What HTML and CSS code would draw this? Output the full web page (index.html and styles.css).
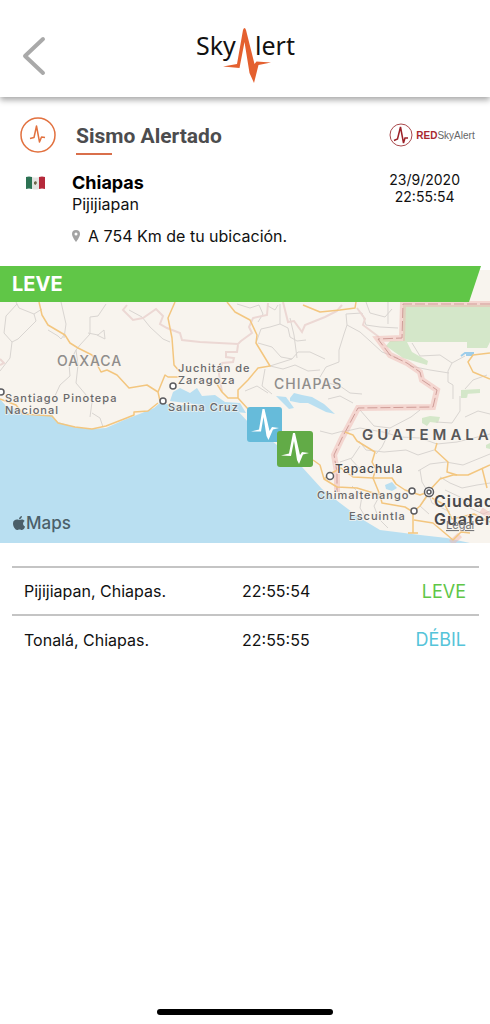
FILE: index.html
```html
<!DOCTYPE html>
<html lang="es">
<head>
  <meta charset="UTF-8">
  <meta name="viewport" content="width=device-width, initial-scale=1">
  <title>SkyAlert - Sismo Alertado</title>
  <link rel="stylesheet" href="styles.css">
</head>
<body>
  <header class="topbar">
    <button class="back" type="button" aria-label="Volver">
      <svg width="24" height="40" viewBox="0 0 24 40"><path d="M21 3L3 20L21 37" fill="none" stroke="#a9a9a9" stroke-width="4" stroke-linecap="round" stroke-linejoin="round"/></svg>
    </button>
    <svg class="logo" width="100" height="56" viewBox="0 0 100 56" role="img" aria-label="SkyAlert">
      <text class="logo-text" x="1" y="27">Sky</text>
      <text class="logo-text" x="60" y="27">lert</text>
      <path d="M28 38.500L42 36L48 2Q49.500 -2 51 2L59.500 36L61.500 33.500L76 34.500L63.500 37L59 55L54.500 45L49.500 14L44.500 40Z" fill="#e4602f"/>
    </svg>
  </header>

  <main>
    <section class="info">
      <svg class="alert-icon" width="36" height="36" viewBox="0 0 36 36">
        <circle cx="18" cy="18" r="17" fill="none" stroke="#e2713f" stroke-width="1.500"/>
        <path d="M10 21.500L14 20.500L16.500 9L19.500 25L21.500 20L25 20.500" fill="none" stroke="#e2713f" stroke-width="1.500" stroke-linejoin="round"/>
      </svg>
      <h1>Sismo Alertado</h1>
      <div class="network">
        <svg width="24" height="24" viewBox="0 0 24 24">
          <circle cx="12" cy="12" r="11" fill="none" stroke="#a9494c" stroke-width="1"/>
          <path d="M5 17.500L8.500 16L11.500 4L14.500 20L16 15L19 15" fill="none" stroke="#9c2128" stroke-width="1.500"/>
        </svg>
        <span><b>RED</b>SkyAlert</span>
      </div>

      <svg class="flag" width="19" height="14" viewBox="0 0 19 14">
        <path d="M0 1Q3 0 6 1V13Q3 12 0 13Z" fill="#2c7253"/>
        <path d="M6 1Q10 2 13 1V13Q10 14 6 13Z" fill="#e4e4e2"/>
        <path d="M13 1Q16 0 19 1V13Q16 12 13 13Z" fill="#b5293b"/>
        <path d="M8 6L10 5L11 7L9.500 9L8 8Z" fill="#6d6648"/>
      </svg>
      <div class="place">
        <h2>Chiapas</h2>
        <p>Pijijiapan</p>
      </div>
      <time class="date" datetime="2020-09-23T22:55:54">23/9/2020<br>22:55:54</time>

      <p class="distance">
        <svg width="8" height="12" viewBox="0 0 8 12"><path fill-rule="evenodd" d="M4 0A4 4 0 0 1 8 4C8 7 4 12 4 12S0 7 0 4A4 4 0 0 1 4 0ZM4 2.500A1.500 1.500 0 1 0 4 5.500A1.500 1.500 0 1 0 4 2.500Z" fill="#a3a3a3"/></svg>
        A 754 Km de tu ubicación.
      </p>
    </section>

    <section class="map">
      <svg class="map-canvas" viewBox="0 0 490 277" preserveAspectRatio="xMidYMid slice">
        <rect width="490" height="277" fill="#f8f4ee"/>
        <rect width="490" height="4" fill="#fff"/>

        <!-- parks -->
        <g fill="#d4e7c9">
          <path d="M403 39H490V76L487 82H467V76H407L412 86L428 95L427 99L403 92L386 80L390 75H403Z"/>
          <path d="M461 124L480 123V127L466 128V132H461Z"/>
          <path d="M422 152L430 150L440 151L438 157L430 156L427 160L422 157Z"/>
          <path d="M462 129L468 127L467 132ZM486 179L490 177V183L486 182Z"/>
        </g>

        <!-- sea and lagoons -->
        <g fill="#b9dff1">
          <path d="M0 133L6 140L30 148L52 149L58 156L75 161L92 163L106 162L124 154L142 147L154 142L160 137L172 139L200 139L220 138L235 142L250 158L277 179L302 201L322 223L340 237L360 252L380 264L420 269L447 272L470 277H0Z"/>
          <path d="M170 135L173 126L180 122L190 127L197 122L202 130L215 129L225 136L240 137L246 147L235 146L210 140Z"/>
          <path d="M290 132L294 127L302 129L312 131L324 138L335 148L326 146L308 137L300 137L290 135Z"/>
          <path d="M276 130L286 131L294 142L289 143Z"/>
          <path d="M385 219L392 216L397 222L392 225L386 223Z"/>
        </g>
        <path d="M461 90L465 87H474M466 89H473" fill="none" stroke="#9dcdea" stroke-width="2"/>

        <!-- minor roads -->
        <g fill="none" stroke="#d9d5d1" stroke-width="1">
          <path d="M17 38L6 50L4 67L12 76L18 73L27 64L36 55L34 48L19 42L16 36M12 76L10 92L0 105M34 48L42 43M61 36L66 58L64 72M106 38L98 50L90 51L90 68L80 79L76 84L78 99L76 117L92 136L90 151M88 67L98 69L104 64L105 73L97 69M76 84L69 98L70 110L60 119L54 132M129 44L142 51L150 61L163 73L170 76"/>
          <path d="M48 64L58 70L61 73L64 69M92 147L100 152L103 161M237 38L250 42L259 39L263 48L258 56M268 40L275 44L278 39M280 38L280 58L270 61L261 63L256 77M280 58L288 62L290 71L297 75L306 74M258 77L272 81L281 91L292 93L270 100M292 93L298 86L310 86L325 93M270 100L283 103L295 99L308 105L320 104M265 103L262 120L272 128M245 125L257 120L268 127M290 52L294 69L297 92"/>
          <path d="M346 48L362 47L366 59L380 61L398 62M346 48L347 59L360 66L370 75L382 86L398 92M347 59L344 68L339 84V96L326 101L320 111M366 36L370 47L385 51L392 43M388 36V58M412 77L420 90L440 89L452 97L448 105V116L453 119V133M410 100L430 104L449 107M452 97L465 90M320 123L328 117L340 120L350 127L362 128M328 133L340 130L353 137M320 165L332 168L343 165M360 144L374 160L390 162L411 151L420 144M460 130V145L452 157L436 156M465 123L473 114L487 109M465 151L478 145L490 148"/>
          <path d="M342 166L360 162L383 166L400 171L420 172L437 178L457 176L490 168M359 175L366 184L384 186L406 184L418 189L434 184M390 164L382 181L376 188M420 204L422 216L428 226L432 237L450 246M418 205L430 198L446 196L463 199L490 188M340 196L352 192L360 180M350 192L360 203L372 207M352 220L362 230L360 242L366 252M380 229L374 240L379 253L388 262M440 211L450 217L462 222L477 219L490 217M445 224L460 231L468 238M470 242L483 248L490 245M427 231L420 240L429 248"/>
        </g>

        <!-- state limits -->
        <path d="M127 39L123 44L133 54L143 52L156 43L163 50L160 58L167 62L180 67L182 74L200 76L238 78L241 75L252 67L249 61L253 52L267 49L268 37M238 79L237 86L226 86V91L234 92L233 96L222 97L219 108L222 126M283 36L288 56L294 55L302 66L305 59L325 51L337 45L342 39M357 42L365 53L363 59L379 71M0 93L4 97L0 99" fill="none" stroke="#ecd8d4" stroke-width="2"/>

        <!-- country border -->
        <path class="border-glow" d="M490 38H403L402 72L378 73L390 89L407 97L420 106L422 114L437 124L433 141L358 142L342 172L334 189L337 206V226"/>
        <path class="border-line" d="M490 38H403L402 72L378 73L390 89L407 97L420 106L422 114L437 124L433 141L358 142L342 172L334 189L337 206V226"/>
        <path class="border-glow" d="M451 277L460 269M481 244L490 250"/>

        <!-- highways -->
        <g fill="none" stroke="#f3c67f" stroke-width="1.500" stroke-linejoin="round">
          <path d="M39 36L42 49L48 59L65 69L70 77L78 82L92 89L101 106L107 104L117 109L129 122L147 119L158 126L160 135M158 126L165 109L168 111H180M175 36L168 52L172 72L174 99L180 106"/>
          <path d="M227 36L235 46L250 54L257 69L256 77L270 100L258 102L248 114L238 124V132L228 132L222 126L215 115M238 132L248 143M303 39L320 46L340 44L355 42L356 36"/>
          <path d="M0 133L16 139L23 148L52 150L58 157L75 161L92 163L106 160L124 153L134 149V146L148 145L158 137"/>
          <path d="M490 87L473 89L468 96L473 106L490 113M345 166L353 169L357 175L375 186L372 196L376 203L373 212L392 212L396 218L405 224L420 229L428 226L440 213L453 209H468L490 199"/>
          <path d="M437 177L435 184L448 196L447 206L457 209M313 194L320 199L324 213L330 208L341 202L353 211L373 212M324 213L337 221L357 222L380 229L382 237L405 241L413 246V267M428 228L420 240L413 246M408 267H418M414 254L433 257L453 274M432 232L445 239L452 253L474 248L490 256M482 202L487 222M453 274L461 266L470 267M380 229L373 212"/>
        </g>

        <!-- towns -->
        <g fill="#fff" stroke="#5c5c60" stroke-width="1.500">
          <circle cx="1" cy="126" r="3"/>
          <circle cx="173" cy="120" r="3"/>
          <circle cx="163" cy="135" r="3"/>
          <circle cx="330" cy="210" r="3.500"/>
          <circle cx="412" cy="225" r="3"/>
          <circle cx="414" cy="245" r="3"/>
          <circle cx="429" cy="226" r="4.500"/>
          <circle cx="429" cy="226" r="2"/>
        </g>

        <g class="labels">
          <text class="state" x="57" y="100">OAXACA</text>
          <text class="state" x="274" y="123">CHIAPAS</text>
          <text class="country" x="362" y="174">GUATEMALA</text>
          <text class="town" x="178" y="106">Juchitán de</text>
          <text class="town" x="178" y="118">Zaragoza</text>
          <text class="town" x="5" y="136">Santiago Pinotepa</text>
          <text class="town" x="5" y="148">Nacional</text>
          <text class="town" x="168" y="145">Salina Cruz</text>
          <text class="town" x="317" y="233">Chimaltenango</text>
          <text class="town" x="349" y="254">Escuintla</text>
          <text class="town dark" x="335" y="207">Tapachula</text>
          <text class="capital" x="434" y="241">Ciudad de</text>
          <text class="capital" x="434" y="259">Guatemala</text>
        </g>

        <!-- epicentre markers -->
        <g transform="translate(247 141)">
          <rect width="35" height="35" rx="3" fill="#66bbda"/>
          <path d="M4 24.500L12 22.500L15.500 2H17.500L22.500 24L25 20L32 21L26 22.500L21.500 33L19.500 29L16.500 10L14 24.500Z" fill="#fff"/>
        </g>
        <g transform="translate(277 165)">
          <rect width="36" height="36" rx="3" fill="#62ab47"/>
          <path d="M4 24.500L12 22.500L16 2H18L23 24L25 21L32 22L26 23.500L22 33L20 29L17 10L14 25Z" fill="#fff"/>
        </g>

        <path transform="translate(13 250)" fill="#4b5f69" d="M6 4C4 3 0 3.500 0 7.500C0 11 2.500 14 4 14C5 14 5.500 13.400 6.500 13.400S8 14 9 14C10.500 14 12 11.500 12 10.500C9.500 9.500 9.500 6 11.700 5C10 3 8 3.500 6 4ZM6 3.300C6 1.500 7.500 0 9 0C9 2 7.500 3.500 6 3.300Z"/>
        <text class="provider" x="26" y="263">Maps</text>
        <a href="#legal"><text class="legal" x="446" y="263">Legal</text></a>
      </svg>
      <div class="level">LEVE</div>
    </section>

    <table class="stations">
      <tbody>
        <tr>
          <td>Pijijiapan, Chiapas.</td>
          <td>22:55:54</td>
          <td class="intensity leve">LEVE</td>
        </tr>
        <tr>
          <td>Tonalá, Chiapas.</td>
          <td>22:55:55</td>
          <td class="intensity debil">DÉBIL</td>
        </tr>
      </tbody>
    </table>
  </main>

  <div class="home-bar"></div>
</body>
</html>
```
FILE: styles.css
```css
* {
  box-sizing: border-box;
}
body {
  margin: 0;
  min-height: 100vh;
  display: flex;
  flex-direction: column;
  background: #fff;
  color: #111;
  font-family: Inter, "Liberation Sans", sans-serif;
  font-size: 16px;
}
h1, h2, p {
  margin: 0;
}

/* top bar */
.topbar {
  display: grid;
  grid-template-columns: 48px 1fr 48px;
  align-items: center;
  justify-items: center;
  padding: 28px 10px 13px;
  background: #fff;
  box-shadow: 0 3px 6px rgba(0, 0, 0, 0.35);
}
.back {
  padding: 0;
  border: none;
  background: none;
  cursor: pointer;
  line-height: 0;
}
.logo {
  display: block;
  overflow: visible;
}
.logo-text {
  font-family: "Noto Sans", sans-serif;
  font-size: 25px;
  fill: #111;
}

/* alert summary */
.info {
  display: grid;
  grid-template-columns: 52px 1fr auto;
  align-items: start;
  padding: 20px 13px 20px 20px;
}
h1 {
  justify-self: start;
  margin-left: 4px;
  padding-top: 6px;
  font-family: Roboto, sans-serif;
  font-size: 21px;
  font-weight: 700;
  line-height: 26px;
  color: #4c4c4e;
}
h1::after {
  content: "";
  display: block;
  width: 36px;
  height: 2px;
  margin-top: 4px;
  background: #d96f4b;
}
.network {
  display: flex;
  align-items: center;
  gap: 3px;
  padding-top: 6px;
  font-family: "Liberation Sans", sans-serif;
  font-size: 10px;
  color: #666;
}
.network b {
  color: #a9282f;
}
.flag {
  margin: 21px 0 0 6px;
}
.place {
  padding-top: 17px;
}
h2 {
  font-size: 18px;
  font-weight: 700;
  line-height: 22px;
  color: #000;
}
.place p {
  line-height: 20px;
}
.date {
  justify-self: end;
  padding: 16px 17px 0 0;
  font-size: 14px;
  line-height: 17px;
  text-align: center;
}
.distance {
  grid-column: 2 / 4;
  display: flex;
  align-items: center;
  gap: 8px;
  padding-top: 12px;
  line-height: 20px;
}

/* map */
.map {
  position: relative;
  height: 277px;
  overflow: hidden;
}
.map-canvas {
  position: absolute;
  inset: 0;
  width: 100%;
  height: 100%;
}
.level {
  position: relative;
  margin-right: 9px;
  padding-left: 12px;
  background: #60c647;
  clip-path: polygon(0 0, 100% 0, calc(100% - 12px) 100%, 0 100%);
  color: #fff;
  font-size: 20px;
  font-weight: 700;
  line-height: 36px;
}
.border-glow {
  fill: none;
  stroke: #f0b8b2;
  stroke-opacity: 0.5;
  stroke-width: 6;
}
.border-line {
  fill: none;
  stroke: #cf9d98;
  stroke-width: 1;
  stroke-dasharray: 10 3;
}
.labels text {
  stroke: #f8f4ee;
  stroke-width: 2;
  stroke-opacity: 0.7;
  paint-order: stroke;
  stroke-linejoin: round;
}
.state {
  font-size: 14px;
  font-weight: 500;
  letter-spacing: 1px;
  fill: #8f8d8b;
}
.country {
  font-size: 15px;
  font-weight: 600;
  letter-spacing: 4px;
  fill: #58585a;
}
.town {
  font-size: 11px;
  font-weight: 500;
  letter-spacing: 1px;
  fill: #68686a;
}
.town.dark {
  font-size: 12px;
  fill: #4c4c4e;
}
.capital {
  font-size: 16px;
  font-weight: 600;
  letter-spacing: 1px;
  fill: #48484a;
}
.provider {
  font-size: 17px;
  font-weight: 500;
  fill: #4b5f69;
}
.legal {
  font-size: 11px;
  fill: #77777a;
  text-decoration: underline;
}

/* stations */
.stations {
  width: calc(100% - 23px);
  margin: 23px 11px 0 12px;
  border-collapse: collapse;
  table-layout: fixed;
}
.stations td {
  height: 48px;
  padding: 0 0 0 12px;
  border-top: 2px solid #c4c4c4;
}
.stations td:nth-child(2) {
  width: 120px;
}
.stations td:first-child {
  width: 218px;
}
.stations .intensity {
  padding: 0 13px 0 0;
  font-size: 18px;
  text-align: right;
}
.leve {
  color: #60c647;
}
.debil {
  color: #55c4d9;
}

.home-bar {
  width: 176px;
  height: 6px;
  margin: auto auto 9px;
  border-radius: 3px;
  background: #000;
}
```
